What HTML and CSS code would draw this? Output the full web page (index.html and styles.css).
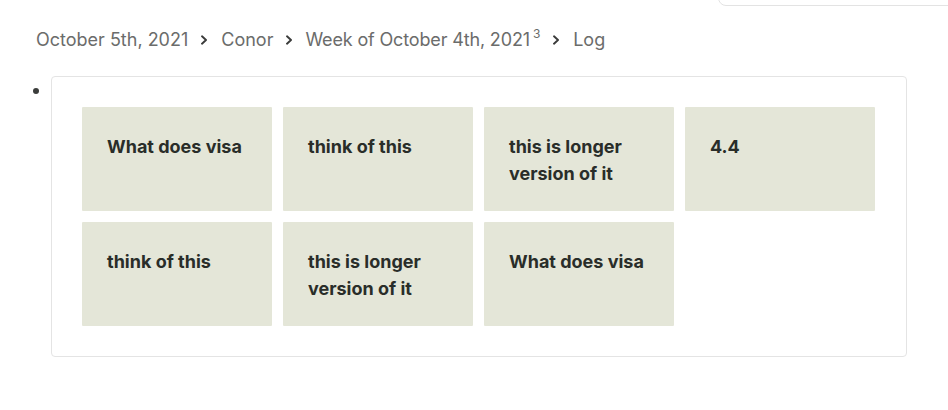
FILE: index.html
```html
<!DOCTYPE html>
<html lang="en">
<head>
<meta charset="utf-8">
<title>Log</title>
<link rel="stylesheet" href="styles.css">
</head>
<body>
<header class="topbar">
  <div class="search"></div>
</header>
<nav class="crumbs">
  <span class="crumb">October 5th, 2021</span>
  <span class="sep"><svg viewBox="0 0 10 10" width="10" height="10"><path d="M3 1.3 L7 5 L3 8.7" fill="none" stroke="#3a3b3a" stroke-width="1.9" stroke-linecap="round" stroke-linejoin="round"/></svg></span>
  <span class="crumb">Conor</span>
  <span class="sep"><svg viewBox="0 0 10 10" width="10" height="10"><path d="M3 1.3 L7 5 L3 8.7" fill="none" stroke="#3a3b3a" stroke-width="1.9" stroke-linecap="round" stroke-linejoin="round"/></svg></span>
  <span class="crumb crumb-week">Week of October 4th, 2021<sup class="count">3</sup></span>
  <span class="sep"><svg viewBox="0 0 10 10" width="10" height="10"><path d="M3 1.3 L7 5 L3 8.7" fill="none" stroke="#3a3b3a" stroke-width="1.9" stroke-linecap="round" stroke-linejoin="round"/></svg></span>
  <span class="crumb">Log</span>
</nav>
<main class="block">
  <span class="bullet"></span>
  <section class="card">
    <div class="grid">
      <div class="tile">What does visa</div>
      <div class="tile">think of this</div>
      <div class="tile">this is longer<br>version of it</div>
      <div class="tile">4.4</div>
      <div class="tile">think of this</div>
      <div class="tile">this is longer<br>version of it</div>
      <div class="tile">What does visa</div>
    </div>
  </section>
</main>
</body>
</html>
```

FILE: styles.css
```css
* { box-sizing: border-box; }
html, body { margin: 0; padding: 0; background: #fff; }
body {
  font-family: Inter, "Noto Sans", "Liberation Sans", sans-serif;
  color: #2e312e;
  width: 948px;
  height: 410px;
  overflow: hidden;
}
.topbar {
  height: 6px;
  display: flex;
  justify-content: flex-end;
  align-items: flex-end;
  overflow: hidden;
}
.search {
  flex: 0 0 250px;
  height: 40px;
  margin-right: -20px;
  border: 1px solid #e3e3e3;
  border-radius: 8px;
}
.crumbs {
  display: flex;
  align-items: center;
  padding: 22px 0 0 36px;
  font-size: 18px;
  line-height: 24px;
  color: #6b6c6b;
  white-space: nowrap;
}
.crumb-week { letter-spacing: -0.15px; margin-left: -1px; }
.sep {
  display: inline-flex;
  align-items: center;
  margin: 0 12px 0 11px;
  height: 24px;
}
.count {
  font-size: 12px;
  line-height: 0;
  vertical-align: 0;
  position: relative;
  top: -8px;
  margin-left: 3px;
}
.block {
  display: flex;
  align-items: flex-start;
  padding: 24px 0 0 33px;
}
.bullet {
  width: 6px;
  height: 6px;
  border-radius: 50%;
  background: #3b3d3b;
  margin-top: 12px;
  flex: 0 0 6px;
}
.card {
  margin-left: 12px;
  width: 856px;
  border: 1px solid #e4e4e4;
  border-radius: 4px;
  padding: 30px;
}
.grid {
  display: grid;
  grid-template-columns: repeat(4, 190px);
  grid-auto-rows: 104px;
  gap: 11px;
}
.tile {
  background: #e4e6d8;
  padding: 26px 25px 0 25px;
  font-size: 18px;
  font-weight: 700;
  line-height: 27px;
  color: #292d29;
  border-radius: 1px;
}
```
